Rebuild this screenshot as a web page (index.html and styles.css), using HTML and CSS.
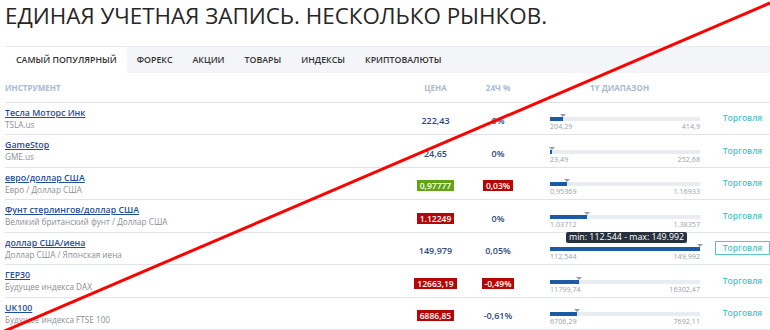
FILE: index.html
```html
<!DOCTYPE html>
<html>
<head>
    <title>Единая учетная запись</title>
    <link rel="stylesheet" href="styles.css">
</head>
<body>
    <div class="page">
        <h1 class="title">ЕДИНАЯ УЧЕТНАЯ ЗАПИСЬ. НЕСКОЛЬКО РЫНКОВ.</h1>

        <div class="tabs">
            <span class="tab active">САМЫЙ ПОПУЛЯРНЫЙ</span>
            <span class="tab">ФОРЕКС</span>
            <span class="tab">АКЦИИ</span>
            <span class="tab">ТОВАРЫ</span>
            <span class="tab">ИНДЕКСЫ</span>
            <span class="tab">КРИПТОВАЛЮТЫ</span>
        </div>

        <div class="table">
            <div class="row head">
                <div class="col-name">ИНСТРУМЕНТ</div>
                <div class="col-price">ЦЕНА</div>
                <div class="col-change">24Ч %</div>
                <div class="col-range">1Y ДИАПАЗОН</div>
                <div class="col-trade"></div>
            </div>

            <div class="row">
                <div class="col-name">
                    <a class="name" href="#">Тесла Моторс Инк</a>
                    <div class="sub">TSLA.us</div>
                </div>
                <div class="col-price"><span class="num">222,43</span></div>
                <div class="col-change"><span class="num">0%</span></div>
                <div class="col-range">
                    <div class="track"><div class="fill" style="width: 8.6%"><span class="mark"></span></div></div>
                    <div class="ends"><span>204,29</span><span>414,9</span></div>
                </div>
                <div class="col-trade"><a class="trade" href="#">Торговля</a></div>
            </div>

            <div class="row">
                <div class="col-name">
                    <a class="name" href="#">GameStop</a>
                    <div class="sub">GME.us</div>
                </div>
                <div class="col-price"><span class="num">24,65</span></div>
                <div class="col-change"><span class="num">0%</span></div>
                <div class="col-range">
                    <div class="track"><div class="fill" style="width: 1.3%"><span class="mark"></span></div></div>
                    <div class="ends"><span>23,49</span><span>252,68</span></div>
                </div>
                <div class="col-trade"><a class="trade" href="#">Торговля</a></div>
            </div>

            <div class="row">
                <div class="col-name">
                    <a class="name" href="#">евро/доллар США</a>
                    <div class="sub">Евро / Доллар США</div>
                </div>
                <div class="col-price"><span class="badge up">0,97777</span></div>
                <div class="col-change"><span class="badge down">0,03%</span></div>
                <div class="col-range">
                    <div class="track"><div class="fill" style="width: 11.2%"><span class="mark"></span></div></div>
                    <div class="ends"><span>0,95369</span><span>1.16933</span></div>
                </div>
                <div class="col-trade"><a class="trade" href="#">Торговля</a></div>
            </div>

            <div class="row">
                <div class="col-name">
                    <a class="name" href="#">Фунт стерлингов/доллар США</a>
                    <div class="sub">Великий британский фунт / Доллар США</div>
                </div>
                <div class="col-price"><span class="badge down">1.12249</span></div>
                <div class="col-change"><span class="num">0%</span></div>
                <div class="col-range">
                    <div class="track"><div class="fill" style="width: 24.6%"><span class="mark"></span></div></div>
                    <div class="ends"><span>1.03712</span><span>1.38357</span></div>
                </div>
                <div class="col-trade"><a class="trade" href="#">Торговля</a></div>
            </div>

            <div class="row hover">
                <div class="col-name">
                    <a class="name" href="#">доллар США/иена</a>
                    <div class="sub">Доллар США / Японская иена</div>
                </div>
                <div class="col-price"><span class="num">149,979</span></div>
                <div class="col-change"><span class="num">0,05%</span></div>
                <div class="col-range">
                    <div class="tip">min: 112.544 - max: 149.992</div>
                    <div class="track"><div class="fill" style="width: 99.97%"><span class="mark"></span></div></div>
                    <div class="ends"><span>112,544</span><span>149,992</span></div>
                </div>
                <div class="col-trade"><a class="trade" href="#">Торговля</a></div>
            </div>

            <div class="row">
                <div class="col-name">
                    <a class="name" href="#">ГЕР30</a>
                    <div class="sub">Будущее индекса DAX</div>
                </div>
                <div class="col-price"><span class="badge down">12663,19</span></div>
                <div class="col-change"><span class="badge down">-0,49%</span></div>
                <div class="col-range">
                    <div class="track"><div class="fill" style="width: 19.2%"><span class="mark"></span></div></div>
                    <div class="ends"><span>11799,74</span><span>16302,47</span></div>
                </div>
                <div class="col-trade"><a class="trade" href="#">Торговля</a></div>
            </div>

            <div class="row">
                <div class="col-name">
                    <a class="name" href="#">UK100</a>
                    <div class="sub">Будущее индекса FTSE 100</div>
                </div>
                <div class="col-price"><span class="badge down">6886,85</span></div>
                <div class="col-change"><span class="num">-0,61%</span></div>
                <div class="col-range">
                    <div class="track"><div class="fill" style="width: 18.3%"><span class="mark"></span></div></div>
                    <div class="ends"><span>6706,29</span><span>7692,11</span></div>
                </div>
                <div class="col-trade"><a class="trade" href="#">Торговля</a></div>
            </div>
        </div>

        <svg class="strike" width="770" height="330" viewBox="0 0 770 330">
            <line x1="0" y1="333" x2="770" y2="3" stroke="#ff0000" stroke-width="3"/>
        </svg>
    </div>
</body>
</html>
```

FILE: styles.css
```css
html, body {
    margin: 0;
    overflow: hidden;
}
body {
    font-family: "Open Sans", "Liberation Sans", sans-serif;
    background: #fff;
    color: #222;
}
.page {
    position: relative;
    width: 770px;
    height: 330px;
    padding-left: 5px;
    box-sizing: border-box;
}
.title {
    margin: 0 0 15px 0;
    font-size: 22.4px;
    font-weight: 400;
    line-height: 31px;
    color: #262626;
}
.tabs {
    display: flex;
    height: 27px;
    box-sizing: border-box;
    background: #f3f5f8;
    border-top: 1px solid #e6e9ee;
}
.tab {
    padding: 0 10px;
    line-height: 26px;
    font-size: 8.8px;
    font-weight: 600;
    color: #333;
}
.tab.active {
    background: #fff;
    padding-left: 11px;
}
.row {
    display: grid;
    grid-template-columns: 400px 61px 64px 180px 60px;
    align-items: center;
    height: 32.5px;
    box-sizing: border-box;
    border-bottom: 1px solid #dfe4ea;
}
.row.head {
    height: 29.5px;
    font-size: 8px;
    font-weight: 700;
    color: #a8bace;
}
.col-price, .col-change {
    text-align: center;
}
.col-range {
    position: relative;
    align-self: start;
    padding: 14.5px 10px 0 20px;
}
.head .col-range {
    align-self: center;
    padding: 0 0 0 60px;
}
.col-trade {
    padding-left: 5px;
}
.name {
    display: block;
    font-size: 8.8px;
    font-weight: 600;
    line-height: 12px;
    color: #1f4e96;
    text-decoration: underline;
}
.sub {
    font-size: 8.2px;
    line-height: 11px;
    color: #8a8f96;
}
.num {
    font-size: 9px;
    font-weight: 600;
    color: #2c4a7b;
}
.badge {
    display: inline-block;
    padding: 0 3px;
    font-size: 8.5px;
    font-weight: 600;
    line-height: 11px;
    color: #fff;
}
.badge.up {
    background: #62a514;
}
.badge.down {
    background: #b50606;
}
.track {
    position: relative;
    height: 4px;
    background: #e8edf2;
}
.fill {
    position: relative;
    height: 4px;
    background: #1d5aa6;
}
.mark {
    position: absolute;
    right: -3px;
    top: -3px;
    width: 0;
    height: 0;
    border-left: 3px solid transparent;
    border-right: 3px solid transparent;
    border-top: 3px solid #8d9eb3;
}
.ends {
    display: flex;
    justify-content: space-between;
    font-size: 7.2px;
    line-height: 10px;
    color: #9aa2ab;
}
.tip {
    position: absolute;
    left: 36px;
    top: -0.5px;
    padding: 0 3px;
    border-radius: 2px;
    background: #27313d;
    color: #fff;
    font-size: 8.8px;
    line-height: 11px;
    white-space: nowrap;
}
.trade {
    display: block;
    height: 14px;
    box-sizing: border-box;
    border: 1px solid transparent;
    line-height: 12px;
    text-align: center;
    font-size: 8.5px;
    font-weight: 600;
    color: #4fc2c9;
    text-decoration: none;
}
.hover .trade {
    border-color: #5ac4cb;
}
.strike {
    position: absolute;
    left: 0;
    top: 0;
    pointer-events: none;
}
```
